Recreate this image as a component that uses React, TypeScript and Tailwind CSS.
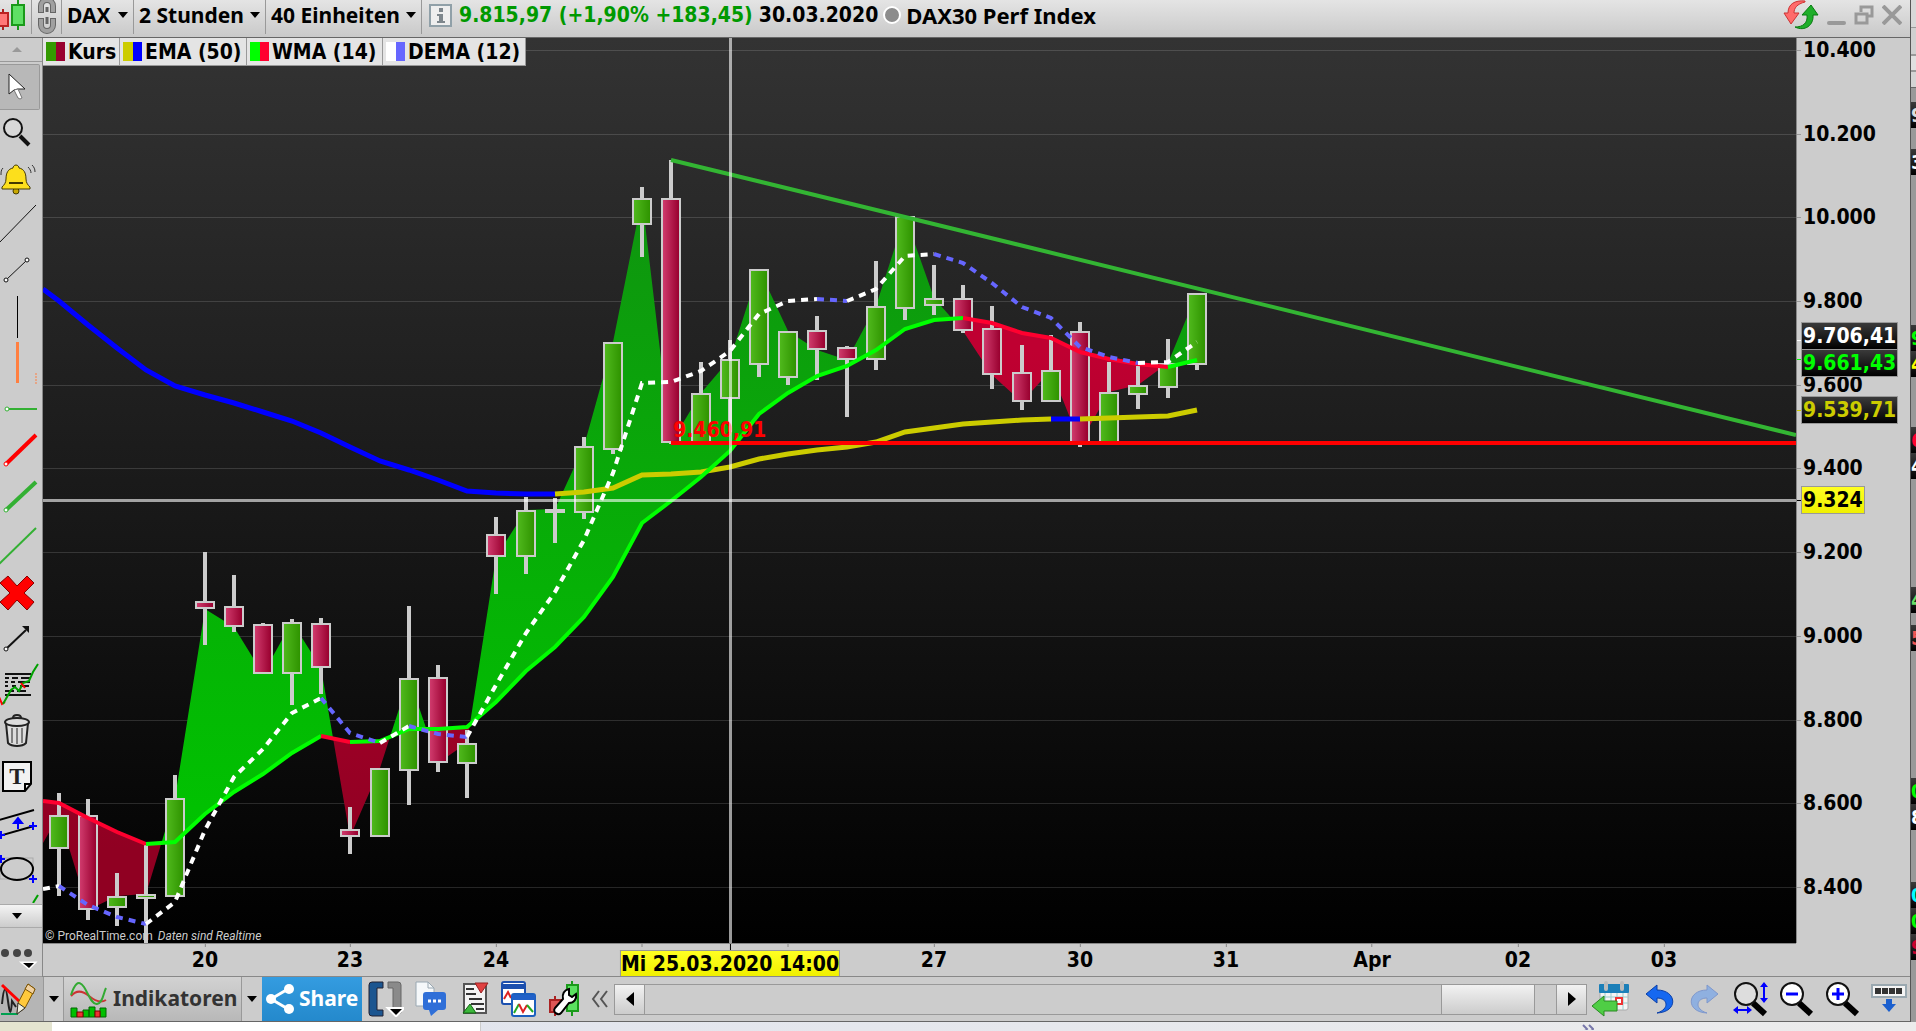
import type { ReactNode } from 'react';

type Candle = [x: number, high: number, top: number, bottom: number, low: number, up: boolean];
type Point = [x: number, y: number];

// The plot works in a fixed drawing space, see PLOT
const PLOT = { left: 43, top: 38, width: 1753, height: 905 };

const CANDLES: Candle[] = [
    [59, 793, 815, 849, 896, true],
    [88, 799, 815, 910, 920, false],
    [117, 873, 896, 908, 926, true],
    [146, 845, 894, 899, 943, true],
    [175, 775, 798, 897, 897, true],
    [205, 552, 601, 609, 645, false],
    [234, 575, 606, 627, 632, false],
    [263, 623, 624, 674, 674, false],
    [292, 619, 622, 674, 705, true],
    [321, 618, 623, 668, 694, false],
    [350, 807, 829, 837, 854, false],
    [380, 768, 768, 837, 837, true],
    [409, 606, 678, 771, 805, true],
    [438, 665, 677, 763, 772, false],
    [467, 730, 743, 764, 798, true],
    [496, 517, 534, 557, 594, false],
    [526, 497, 510, 557, 574, true],
    [555, 498, 509, 513, 543, true],
    [584, 437, 446, 513, 519, true],
    [613, 342, 342, 450, 454, true],
    [642, 187, 198, 225, 257, true],
    [671, 160, 198, 443, 444, false],
    [701, 362, 393, 443, 443, true],
    [730, 340, 359, 399, 432, true],
    [759, 269, 269, 365, 377, true],
    [788, 331, 331, 378, 385, true],
    [817, 316, 330, 350, 380, false],
    [847, 346, 347, 360, 417, false],
    [876, 261, 306, 360, 370, true],
    [905, 216, 216, 309, 320, true],
    [934, 265, 298, 306, 315, true],
    [963, 285, 298, 331, 333, false],
    [992, 306, 328, 375, 389, false],
    [1022, 345, 372, 402, 410, false],
    [1051, 335, 370, 402, 402, true],
    [1080, 322, 331, 443, 447, false],
    [1109, 362, 392, 443, 443, true],
    [1138, 366, 385, 395, 409, true],
    [1168, 339, 363, 388, 398, true],
    [1197, 293, 293, 365, 370, true],
];

const XS = [43, ...CANDLES.map((c) => c[0])];
const WMA = [
    801, 803, 818, 832, 844, 842, 814, 792, 774, 753, 736, 742, 741, 729, 729, 727, 702, 671, 647, 617, 577, 523, 501,
    477, 451, 414, 393, 376, 366, 350, 329, 320, 318, 323, 333, 338, 352, 359, 364, 367, 360,
];
const DEMA = [
    889, 886, 905, 917, 924, 902, 830, 777, 749, 713, 698, 733, 743, 726, 734, 737, 685, 633, 592, 540, 473, 383, 382,
    371, 351, 314, 301, 299, 301, 289, 256, 254, 263, 283, 307, 318, 347, 357, 363, 362, 342,
];
const EMA: Point[] = [
    [43, 289], [59, 301], [88, 325], [117, 348], [146, 370], [175, 386], [205, 395], [234, 403], [263, 412], [292, 421],
    [321, 433], [350, 447], [380, 461], [409, 470], [438, 480], [467, 491], [496, 493], [526, 494], [555, 494],
    [584, 492], [613, 488], [642, 475], [671, 474], [701, 472], [730, 467], [759, 459], [788, 454], [817, 450],
    [847, 447], [876, 442], [905, 432], [934, 428], [963, 424], [992, 422], [1022, 420], [1051, 419], [1080, 419],
    [1109, 418], [1138, 417], [1168, 416], [1197, 410],
];

const zip = (ys: number[]): Point[] => ys.map((y, i) => [XS[i], y]);
const part = (line: Point[], from: number, to: number) =>
    line
        .filter(([x]) => x >= from && x <= to)
        .map((p) => p.join(','))
        .join(' ');

// Fills between close and WMA, split where the two cross
function cloud() {
    const close = [843, ...CANDLES.map((c) => (c[5] ? c[2] : c[3]))];
    let above = '';
    let below = '';
    for (let i = 0; i < XS.length - 1; i++) {
        const [x1, x2] = [XS[i], XS[i + 1]];
        const d1 = close[i] - WMA[i];
        const d2 = close[i + 1] - WMA[i + 1];
        if (d1 * d2 >= 0) {
            const d = `M${x1} ${close[i]}L${x2} ${close[i + 1]}V${WMA[i + 1]}L${x1} ${WMA[i]}Z`;
            if (d1 + d2 < 0) above += d;
            else below += d;
            continue;
        }
        const t = d1 / (d1 - d2);
        const cross = `${x1 + t * (x2 - x1)} ${WMA[i] + t * (WMA[i + 1] - WMA[i])}`;
        const first = `M${x1} ${close[i]}L${cross}L${x1} ${WMA[i]}Z`;
        const second = `M${x2} ${close[i + 1]}L${cross}L${x2} ${WMA[i + 1]}Z`;
        above += d1 < 0 ? first : second;
        below += d1 < 0 ? second : first;
    }
    return { above, below };
}

const PRICES = [
    ['10.400', 50], ['10.200', 134], ['10.000', 217], ['9.800', 301], ['9.600', 385], ['9.400', 468],
    ['9.200', 552], ['9.000', 636], ['8.800', 720], ['8.600', 803], ['8.400', 887],
] as const;

const BADGES = [
    { text: '9.706,41', y: 335, tick: 340, color: 'text-white', line: 'bg-white' },
    { text: '9.661,43', y: 362, tick: 359, color: 'text-[#00ff00]', line: 'bg-[#00ff00]' },
    { text: '9.539,71', y: 409, tick: 410, color: 'text-[#cccc00]', line: 'bg-[#cccc00]' },
];

const DAYS = [
    ['20', 205], ['23', 350], ['24', 496], ['', 642], ['', 788], ['27', 934], ['30', 1080], ['31', 1226],
    ['Apr', 1372], ['02', 1518], ['03', 1664],
] as const;

const LEGEND = [
    ['Kurs', 'bg-[#339900]', 'bg-[#99002f]', 'w-[77px]'],
    ['EMA (50)', 'bg-[#cccc00]', 'bg-[#0000ff]', 'w-[127px]'],
    ['WMA (14)', 'bg-[#00ff00]', 'bg-[#ff002f]', 'w-[136px]'],
    ['DEMA (12)', 'bg-white', 'bg-[#6666ff]', 'w-[143px]'],
];

const topPct = (y: number) => ({ top: `${((y - PLOT.top) / PLOT.height) * 100}%` });
const leftPct = (x: number) => ({ left: `${((x - PLOT.left) / PLOT.width) * 100}%` });

function Caret() {
    return (
        <svg width="10" height="6" viewBox="0 0 10 6" className="shrink-0">
            <path d="M0 0h10L5 6z" fill="#000" />
        </svg>
    );
}

function Dropdown({ label, value, width }: { label: string; value: string; width: string }) {
    return (
        <label className={`flex h-full items-center border-r border-[#999] pr-[5px] pl-[5px] ${width}`}>
            <select aria-label={label} className="min-w-0 flex-1 appearance-none bg-transparent font-bold outline-none">
                <option>{value}</option>
            </select>
            <Caret />
        </label>
    );
}

function TopBar() {
    return (
        <header className="flex h-[38px] shrink-0 items-center border-b border-[#666] bg-linear-to-b/srgb from-[#e4e4e4] to-[#c9c9c9] pb-[7px] text-[21px] leading-[30px]">
            <div className="flex h-[37px] w-full items-center">
                <div className="h-full w-8 shrink-0 border-r border-[#999]">
                    <svg width="30" height="37" viewBox="0 0 30 37">
                        <path d="M3 12v21" stroke="#a22" strokeWidth="2" />
                        <rect x="-4" y="16" width="12" height="13" fill="#f77" stroke="#b22" strokeWidth="2" />
                        <path d="M18 3v30" stroke="#1a9a1a" strokeWidth="2" />
                        <rect x="12" y="8" width="12" height="20" fill="#5fe065" stroke="#1a9a1a" strokeWidth="2" />
                    </svg>
                </div>
                <div className="flex h-full w-[30px] shrink-0 justify-center border-r border-[#999]">
                    <svg width="20" height="37" viewBox="0 0 20 37" fill="none">
                        <path d="M4 16V9a6 6 0 0 1 12 0v7M4 21v7a6 6 0 0 0 12 0v-7" stroke="#666" strokeWidth="6" />
                        <path d="M4 15V9a6 6 0 0 1 12 0v6M4 22v6a6 6 0 0 0 12 0v-6" stroke="#a0a0a0" strokeWidth="4" />
                        <path d="M10 10v5M10 20v7" stroke="#666" strokeWidth="3" />
                    </svg>
                </div>
                <Dropdown label="Symbol" value="DAX" width="w-[72px]" />
                <Dropdown label="Intervall" value="2 Stunden" width="w-[132px]" />
                <Dropdown label="Anzahl" value="40 Einheiten" width="w-[156px]" />
                <div className="ml-[7px] flex h-[23px] w-[23px] shrink-0 items-center justify-center border-2 border-[#90a0a8] bg-[#eee]">
                    <svg width="12" height="17" viewBox="0 0 12 17" fill="#7d868c">
                        <path d="M4 1h4v4H4zM2 7h6v7h2v2H2v-2h2V9H2z" />
                    </svg>
                </div>
                <span className="ml-[7px] font-['DejaVu_Sans_Condensed',sans-serif] whitespace-nowrap text-[#009900]">
                    9.815,97 (+1,90% +183,45)
                </span>
                <span className="ml-[6px] font-['DejaVu_Sans_Condensed',sans-serif]">30.03.2020</span>
                <span className="ml-[5px] h-[18px] w-[18px] shrink-0 rounded-full border-2 border-white bg-[#8c8c8c]" />
                <h1 className="ml-[5px] text-[22px] whitespace-nowrap">DAX30 Perf Index</h1>
                <div className="mr-2 ml-auto flex h-full items-center gap-2">
                    <button type="button" aria-label="Aktualisieren">
                        <svg width="36" height="31" viewBox="0 0 36 31">
                            <path d="M22 1C12 0 5 4 5 13H1l7 11 8-11h-5c0-5 3-9 11-11z" fill="#ff6b6b" stroke="#c33" />
                            <path d="M12 27c10 5 19-2 18-12h5L28 5l-9 10h5c1 8-4 12-12 12z" fill="#1fae2a" stroke="#087a10" />
                        </svg>
                    </button>
                    <button type="button" aria-label="Minimieren" className="mt-4 h-1 w-[19px] rounded-xs bg-[#999]" />
                    <button type="button" aria-label="Wiederherstellen">
                        <svg width="20" height="20" viewBox="0 0 20 20" fill="none" stroke="#999" strokeWidth="3">
                            <path d="M7 7V2h11v9h-5M2 9h11v9H2z" />
                        </svg>
                    </button>
                    <button type="button" aria-label="Schließen">
                        <svg width="20" height="20" viewBox="0 0 20 20" stroke="#999" strokeWidth="4">
                            <path d="M1 1l18 18M19 1L1 19" />
                        </svg>
                    </button>
                </div>
            </div>
        </header>
    );
}

const PLUS = 'M-4 0H4M0 -4V4';

// One 42x46 drawing for each tool, top to bottom
const TOOLS: [string, ReactNode][] = [
    [
        'Auswahl',
        <>
            <path d="M9 9v20l5-4 4-1h7z" fill="#fff" stroke="#222" strokeWidth="1" />
            <path d="M14 25l4 8q2 2 4 0l-4-9z" fill="#fff" stroke="#777" />
        </>,
    ],
    [
        'Lupe',
        <>
            <circle cx="13" cy="18" r="9" fill="#d8d8d8" stroke="#111" strokeWidth="2" />
            <path d="M20 26l9 9" stroke="#111" strokeWidth="4" />
        </>,
    ],
    [
        'Alarm',
        <>
            <circle cx="16" cy="35" r="3" fill="#c9a800" stroke="#443a00" />
            <path
                d="M16 9c2 0 3 2 3 3 5 1 7 5 7 11 0 4 2 6 4 8v2H2v-2c2-2 4-4 4-8 0-6 2-10 7-11 0-1 1-3 3-3z"
                fill="#fcdf1c"
                stroke="#443a00"
            />
            <path d="M9 27h14" stroke="#443a00" strokeWidth="2" />
            <path d="M3 12c-2 2-2 4-2 7M28 11c2 2 3 4 3 6M32 9c2 2 3 4 3 7" stroke="#333" fill="none" />
        </>,
    ],
    ['Gerade', <path d="M-2 42L36 3" stroke="#111" strokeWidth="1" />],
    [
        'Strecke',
        <g stroke="#111" fill="#fff">
            <path d="M6 32L27 12" />
            <circle cx="6" cy="32" r="2" />
            <circle cx="27" cy="12" r="2" />
        </g>,
    ],
    ['Vertikale', <rect x="17" y="2" width="1" height="42" fill="#000" />],
    [
        'Vertikale Strecke',
        <>
            <rect x="16" y="2" width="3" height="41" fill="#ff7f40" />
            <path d="M36 33v11" stroke="#ff7f40" strokeDasharray="2 1" />
        </>,
    ],
    [
        'Horizontale',
        <>
            <path d="M7 23h30" stroke="#33b033" strokeWidth="2" />
            <circle cx="7" cy="23" r="2" fill="#fff" stroke="#33b033" />
        </>,
    ],
    [
        'Rote Linie',
        <>
            <path d="M6 32L36 3" stroke="#f00" strokeWidth="4" />
            <circle cx="6" cy="32" r="2" fill="#fff" stroke="#f00" />
        </>,
    ],
    [
        'Grüne Linie',
        <>
            <path d="M6 32L36 4" stroke="#33b033" strokeWidth="4" />
            <circle cx="6" cy="32" r="2" fill="#fff" stroke="#33b033" />
        </>,
    ],
    ['Grüne Gerade', <path d="M-1 40L36 4" stroke="#33b033" strokeWidth="2" />],
    [
        'Löschen',
        <path d="M8 6l9 10 10-10 7 7-10 10 10 9-7 8-10-10L8 40l-8-8 10-9L0 13z" fill="#f00" stroke="#800" />,
    ],
    [
        'Pfeil',
        <>
            <path d="M6 33L26 14" stroke="#111" strokeWidth="2" />
            <path d="M22 10h7v7z" fill="#111" />
            <circle cx="6" cy="33" r="2" fill="#fff" stroke="#111" />
        </>,
    ],
    [
        'Fibonacci',
        <>
            <path d="M5 12h26M5 33h26" stroke="#111" strokeWidth="2" />
            <path d="M5 16h4M12 16h6M21 16h10M5 20h3M11 20h4M18 20h12M5 24h3M12 24h4M20 24h9M5 29h9M17 29h9" stroke="#111" strokeWidth="2" />
            <path d="M-1 35l3 7 3-2" stroke="#f00" strokeWidth="2" fill="none" />
            <path d="M3 42l8-14 4-3 4 4 4-8 6-2 4-9 5-8" stroke="#00a000" strokeWidth="2" fill="none" />
            <path d="M21 21l4 5" stroke="#f00" strokeWidth="2" />
        </>,
    ],
    [
        'Papierkorb',
        <g stroke="#222" strokeWidth="2" fill="#ddd">
            <path d="M6 15l2 20c4 4 14 4 18 0l2-20z" />
            <ellipse cx="17" cy="14" rx="12" ry="4" />
            <path d="M13 10c0-4 8-4 8 0" fill="none" />
            <path d="M12 20v15M17 20v16M22 20v15" strokeWidth="1" />
        </g>,
    ],
    [
        'Text',
        <>
            <path d="M3 8h28v22l-6 7H3z" fill="#f2f2f2" stroke="#000" strokeWidth="2" />
            <path d="M31 30h-6v7" fill="none" stroke="#000" strokeWidth="2" />
            <text x="17" y="30" textAnchor="middle" fontSize="23" fill="#222" className="font-['Liberation_Serif',serif]">
                T
            </text>
        </>,
    ],
    [
        'Kanal',
        <>
            <path d="M-1 20L34 10M-1 36L34 26" stroke="#000" strokeWidth="2" />
            <path d="M18 29v-6h-4l4-5 4 5h-4" fill="#00f" stroke="#00f" strokeWidth="2" />
            <path d={PLUS} transform="translate(1 35)" stroke="#00f" strokeWidth="2" />
            <path d={PLUS} transform="translate(33 26)" stroke="#00f" strokeWidth="2" />
        </>,
    ],
    [
        'Ellipse',
        <>
            <rect x="0" y="12" width="33" height="21" fill="none" stroke="#aaa" />
            <ellipse cx="17" cy="23" rx="16" ry="11" fill="none" stroke="#000" strokeWidth="2" />
            <path d={PLUS} transform="translate(1 13)" stroke="#00f" strokeWidth="2" />
            <path d={PLUS} transform="translate(33 33)" stroke="#00f" strokeWidth="2" />
        </>,
    ],
];

function Sidebar() {
    return (
        <aside className="flex w-[43px] shrink-0 flex-col overflow-hidden border-r border-[#888] bg-[#ccc]">
            <button type="button" aria-label="Nach oben" className="mb-[2px] flex h-6 shrink-0 items-center border-b border-[#999] pl-3">
                <svg width="10" height="5" viewBox="0 0 10 5">
                    <path d="M0 5h10L5 0z" fill="#999" />
                </svg>
            </button>
            {TOOLS.map(([name, icon], i) => (
                <button
                    key={name}
                    type="button"
                    aria-label={name}
                    className={`h-[46px] shrink-0 ${i === 0 ? 'mr-[2px] rounded-r-xs border border-l-0 border-[#999] bg-[#b8b8b8]' : ''}`}
                >
                    <svg width="42" height="46" viewBox="0 0 42 46">
                        {icon}
                    </svg>
                </button>
            ))}
            <div className="min-h-0 flex-1">
                <svg width="42" height="11" viewBox="0 0 42 11">
                    <path d="M33 11l5-8" stroke="#00a000" strokeWidth="2" />
                </svg>
            </div>
            <button
                type="button"
                aria-label="Nach unten"
                className="flex h-6 shrink-0 items-center border-y border-[#aaa] bg-linear-to-b/srgb from-[#f4f4f4] to-[#ccc] pl-3"
            >
                <Caret />
            </button>
            <button type="button" aria-label="Mehr" className="h-[49px] shrink-0 border-b border-[#999]">
                <svg width="42" height="49" viewBox="0 0 42 49">
                    <g fill="#444">
                        <circle cx="5" cy="25" r="4" />
                        <circle cx="17" cy="25" r="4" />
                        <circle cx="28" cy="25" r="4" />
                    </g>
                    <path d="M23 35h11l-5 5z" fill="#000" stroke="#fff" strokeWidth="3" paintOrder="stroke" />
                </svg>
            </button>
        </aside>
    );
}

function Plot() {
    const { above, below } = cloud();
    const wma = zip(WMA);
    const dema = zip(DEMA);
    return (
        <svg
            className="absolute inset-0 h-full w-full"
            viewBox={`${PLOT.left} ${PLOT.top} ${PLOT.width} ${PLOT.height}`}
            preserveAspectRatio="none"
        >
            <defs>
                <linearGradient id="up">
                    <stop offset="0" stopColor="#4fb81c" />
                    <stop offset="1" stopColor="#2f9400" />
                </linearGradient>
                <linearGradient id="down">
                    <stop offset="0" stopColor="#cf3a6c" />
                    <stop offset="1" stopColor="#99002f" />
                </linearGradient>
                <linearGradient id="above" gradientUnits="userSpaceOnUse" x1="0" y1="200" x2="0" y2="850">
                    <stop offset="0" stopColor="#0f950f" />
                    <stop offset="1" stopColor="#00c400" />
                </linearGradient>
                <linearGradient id="below" gradientUnits="userSpaceOnUse" x1="0" y1="350" x2="0" y2="850">
                    <stop offset="0" stopColor="#bf0031" />
                    <stop offset="1" stopColor="#900022" />
                </linearGradient>
            </defs>
            {PRICES.map(([label, y]) => (
                <rect key={label} x="43" y={y} width="1753" height="1" fill="#fff" fillOpacity="0.14" />
            ))}
            <path d={above} fill="url(#above)" />
            <path d={below} fill="url(#below)" />
            {CANDLES.map(([x, high, top, bottom, low, up]) => (
                <g key={x}>
                    <rect x={x - 2} y={high} width="4" height={low - high} fill="#ccc" />
                    <rect x={x - 10} y={top} width="20" height={bottom - top} fill="#ccc" />
                    {bottom - top > 4 && (
                        <rect
                            x={x - 8}
                            y={top + 2}
                            width="16"
                            height={bottom - top - 4}
                            fill={up ? 'url(#up)' : 'url(#down)'}
                        />
                    )}
                </g>
            ))}
            <g fill="none" strokeWidth="4">
                <polyline points="671,160 905,217 1796,435" stroke="#33b533" />
                <g strokeWidth="5">
                    <polyline points={part(EMA, 43, 555)} stroke="#0000ff" />
                    <polyline points={part(EMA, 555, 1051)} stroke="#cccc00" />
                    <polyline points={part(EMA, 1051, 1080)} stroke="#0000ff" />
                    <polyline points={part(EMA, 1080, 1197)} stroke="#cccc00" />
                </g>
                <polyline points={part(wma, 43, 146)} stroke="#ff002f" />
                <polyline points={part(wma, 146, 321)} stroke="#00ff00" />
                <polyline points={part(wma, 321, 350)} stroke="#ff002f" />
                <polyline points={part(wma, 350, 963)} stroke="#00ff00" />
                <polyline points={part(wma, 963, 1168)} stroke="#ff002f" />
                <polyline points={part(wma, 1168, 1197)} stroke="#00ff00" />
                <g strokeDasharray="7 6">
                    <polyline points={part(dema, 43, 59)} stroke="#fff" />
                    <polyline points={part(dema, 59, 146)} stroke="#6666ff" />
                    <polyline points={part(dema, 146, 321)} stroke="#fff" />
                    <polyline points={part(dema, 321, 380)} stroke="#6666ff" />
                    <polyline points={part(dema, 380, 409)} stroke="#fff" />
                    <polyline points={part(dema, 409, 467)} stroke="#6666ff" />
                    <polyline points={part(dema, 467, 817)} stroke="#fff" />
                    <polyline points={part(dema, 817, 847)} stroke="#6666ff" />
                    <polyline points={part(dema, 847, 934)} stroke="#fff" />
                    <polyline points={part(dema, 934, 1138)} stroke="#6666ff" />
                    <polyline points={part(dema, 1138, 1197)} stroke="#fff" />
                </g>
                <path d="M671 443H1796" stroke="#ff0000" />
            </g>
            <text x="673" y="437" fontSize="21" fontWeight="700" fill="#f00" className="font-['DejaVu_Sans_Condensed',sans-serif]">
                9.460,91
            </text>
            <g fill="#fff" fillOpacity="0.6">
                <rect x="729" y="38" width="3" height="905" />
                <rect x="43" y="499" width="1753" height="3" />
            </g>
        </svg>
    );
}

function PriceAxis() {
    return (
        <div className="relative w-[114px] shrink-0 border-l border-[#888] font-['DejaVu_Sans_Condensed',sans-serif] text-[21px] leading-[26px]">
            {PRICES.map(([label, y]) => (
                <div key={label} className="absolute left-0 flex -translate-y-1/2 items-center gap-[2px]" style={topPct(y)}>
                    <span className="h-px w-1 bg-[#999]" />
                    {label}
                </div>
            ))}
            {BADGES.map((badge) => (
                <div key={badge.text}>
                    <span className={`absolute left-0 h-px w-1 ${badge.line}`} style={topPct(badge.tick)} />
                    <span
                        className={`absolute left-1 h-7 -translate-y-1/2 border border-[#999] bg-linear-to-b/srgb from-[#3a3a3a] to-black px-[1px] ${badge.color}`}
                        style={topPct(badge.y + 1)}
                    >
                        {badge.text}
                    </span>
                </div>
            ))}
            <span className="absolute left-0 h-px w-1 bg-black" style={topPct(500)} />
            <span
                className="absolute left-1 h-7 -translate-y-1/2 border border-[#999] bg-linear-to-b/srgb from-[#ffff22] to-[#f0f000] px-[1px]"
                style={topPct(500)}
            >
                9.324
            </span>
        </div>
    );
}

function TimeAxis() {
    return (
        <div className="flex h-[34px] shrink-0 border-b border-[#888] font-['DejaVu_Sans_Condensed',sans-serif] text-[21px] leading-[26px]">
            <div className="relative flex-1 border-t border-[#888]">
                {DAYS.map(([label, x]) => (
                    <div key={x} className="absolute top-0 flex -translate-x-1/2 flex-col items-center" style={leftPct(x)}>
                        <span className="h-[3px] w-px bg-[#888]" />
                        {label}
                    </div>
                ))}
                <div className="absolute top-0 flex -translate-x-1/2 flex-col items-center" style={leftPct(730)}>
                    <span className="h-[6px] w-px bg-black" />
                    <span className="h-[26px] border border-b-0 border-[#999] bg-linear-to-b/srgb from-[#ffff22] to-[#f0f000] whitespace-nowrap">
                        Mi 25.03.2020 14:00
                    </span>
                </div>
            </div>
            <div className="w-[114px] shrink-0" />
        </div>
    );
}

function Chart() {
    return (
        <main className="flex min-w-0 flex-1 flex-col bg-[#ccc]">
            <div className="flex min-h-0 flex-1">
                <div className="relative flex-1 overflow-hidden bg-linear-to-b/srgb from-[#333] to-black">
                    <Plot />
                    <ul className="absolute top-0 left-0 flex h-7 border-b border-[#999] bg-[#e4e4e4] font-['DejaVu_Sans_Condensed',sans-serif] text-[21px] leading-[26px]">
                        {LEGEND.map(([name, first, second, width]) => (
                            <li key={name} className={`flex items-center gap-[3px] border-r border-[#999] pl-[3px] whitespace-nowrap ${width}`}>
                                <span className="flex h-[19px] w-[19px] shrink-0">
                                    <span className={`flex-1 ${first}`} />
                                    <span className={`flex-1 ${second}`} />
                                </span>
                                {name}
                            </li>
                        ))}
                    </ul>
                    <p className="absolute bottom-0 left-0 flex gap-[5px] pl-[2px] font-['Roboto',sans-serif] text-[12px] leading-[14px] font-normal text-[#ccc]">
                        <span>© ProRealTime.com</span>
                        <i>Daten sind Realtime</i>
                    </p>
                </div>
                <PriceAxis />
            </div>
            <TimeAxis />
        </main>
    );
}

function Magnifier({ children, fill = '#fff' }: { children?: ReactNode; fill?: string }) {
    return (
        <svg width="36" height="36" viewBox="0 0 36 36">
            <path d="M20 22l12 11" stroke="#000" strokeWidth="6" />
            <circle cx="13" cy="13" r="11" fill={fill} stroke="#111" strokeWidth="2" />
            {children}
        </svg>
    );
}

function BottomBar() {
    return (
        <footer className="flex h-[45px] shrink-0 items-center border-b border-[#666] bg-[#ccc] text-[#333]">
            <button type="button" aria-label="Zeichnen" className="h-full w-11 shrink-0 border-r border-[#999] bg-[#b5b5b5]">
                <svg width="42" height="44" viewBox="0 0 42 44">
                    <path d="M2 27c2-20 4-18 6-3s3 14 4 0l4 6" fill="none" stroke="#222" strokeWidth="2" />
                    <path d="M1 37h17" stroke="#00a050" strokeWidth="2" />
                    <path d="M2 8l18 17" stroke="#f00" strokeWidth="3" />
                    <path d="M18 26L28 7l7 5-10 19-8 6z" fill="#ffc93c" stroke="#7a5200" />
                    <path d="M28 7l7 5-2 5-8-5z" fill="#f0d0a0" stroke="#7a5200" />
                    <path d="M18 26l7 5-8 6z" fill="#eed" stroke="#333" />
                </svg>
            </button>
            <button type="button" aria-label="Zeichenoptionen" className="flex h-full w-5 shrink-0 items-center justify-center border-r border-[#999]">
                <Caret />
            </button>
            <button
                type="button"
                className="flex h-full w-[178px] shrink-0 items-center gap-[6px] border-r border-[#999] bg-linear-to-b/srgb from-[#d2d2d2] to-[#b8b8b8] pl-[6px] text-[21px]"
            >
                <svg width="37" height="37" viewBox="0 0 37 37" className="shrink-0">
                    <path d="M1 15c6-7 12-5 18 0s12 7 17 4" fill="none" stroke="#c33" strokeWidth="2" />
                    <path d="M1 14C4 5 8-3 14 6c5 8 8 18 13 17 6-1 6-10 9-16" fill="none" stroke="#3a3" strokeWidth="2" />
                    <path d="M1 27h6v9H1zM13 29h6v7h-6zM19 26h6v10h-6zM30 27h6v9h-6z" fill="#00c000" stroke="#060" />
                    <path d="M7 31h6v5H7zM25 30h5v6h-5z" fill="#e33" stroke="#700" />
                </svg>
                Indikatoren
            </button>
            <button type="button" aria-label="Indikatoren wählen" className="flex h-full w-5 shrink-0 items-center justify-center">
                <Caret />
            </button>
            <button type="button" className="flex h-full w-[100px] shrink-0 items-center gap-[5px] bg-linear-to-b/srgb from-[#349ce0] to-[#2489cc] pl-1 text-[21px] text-white">
                <svg width="28" height="30" viewBox="0 0 28 30" fill="#fff" className="shrink-0">
                    <path d="M5 15L22 5M5 15l17 10" stroke="#fff" strokeWidth="3" />
                    <circle cx="5" cy="15" r="5" />
                    <circle cx="23" cy="5" r="5" />
                    <circle cx="23" cy="25" r="5" />
                </svg>
                Share
            </button>
            <div className="flex shrink-0 items-center gap-[11px] pl-[6px]">
                <button type="button" aria-label="Layout">
                    <svg width="36" height="36" viewBox="0 0 36 36">
                        <path d="M15 1H4q-3 0-3 3v28q0 3 3 3h11v-6H9V7h6z" fill="#1b5590" stroke="#223" />
                        <path d="M20 1h10q3 0 3 3v28h-8V7h-5z" fill="#8a8a8a" stroke="#666" />
                        <path d="M22 28h12l-6 6z" fill="#000" stroke="#fff" strokeWidth="4" paintOrder="stroke" />
                    </svg>
                </button>
                <button type="button" aria-label="Kommentar">
                    <svg width="32" height="36" viewBox="0 0 32 36">
                        <path d="M1 1h12l6 6v18H1z" fill="#f5f8fa" stroke="#9aa8b2" />
                        <path d="M13 1v6h6" fill="none" stroke="#9aa8b2" />
                        <path d="M11 11h17q3 0 3 3v12q0 3-3 3h-5l-7 6-2-6h-3q-3 0-3-3V14q0-3 3-3z" fill="#2f6fd8" />
                        <path d="M13 20h3M18 20h3M23 20h3" stroke="#fff" strokeWidth="3" />
                    </svg>
                </button>
                <button type="button" aria-label="Orderliste" className="pl-1">
                    <svg width="28" height="34" viewBox="0 0 28 34">
                        <path d="M2 2h22v29H2z" fill="#f4f4f4" stroke="#555" strokeWidth="2" />
                        <path d="M4 7h8M4 12h10M7 17h13M9 22h13M14 27h8" stroke="#333" strokeWidth="2" />
                        <path d="M13 1h13l-7 10z" fill="#e04040" stroke="#922" />
                        <path d="M1 31h13L8 22z" fill="#3cb83c" stroke="#161" />
                    </svg>
                </button>
                <button type="button" aria-label="Fenster">
                    <svg width="36" height="36" viewBox="0 0 36 36">
                        <rect x="1" y="1" width="23" height="22" rx="2" fill="#fff" stroke="#1b4fae" strokeWidth="2" />
                        <path d="M1 3h23v5H1z" fill="#1b4fae" />
                        <path d="M3 18l4-7 3 6" fill="none" stroke="#d22" strokeWidth="2" />
                        <rect x="11" y="13" width="23" height="22" rx="2" fill="#fff" stroke="#1b5fbe" strokeWidth="2" />
                        <path d="M11 14h23v5H11z" fill="#2060c8" />
                        <path d="M13 32l5-9" stroke="#2a2" strokeWidth="2" />
                        <path d="M18 23l4 8 4-7" fill="none" stroke="#d22" strokeWidth="2" />
                        <path d="M26 24l6 7" stroke="#2a2" strokeWidth="2" />
                    </svg>
                </button>
                <button type="button" aria-label="Handelssysteme">
                    <svg width="32" height="36" viewBox="0 0 32 36">
                        <path d="M7 15v20" stroke="#a22" strokeWidth="2" />
                        <rect x="2" y="19" width="11" height="12" fill="#d55" stroke="#a22" strokeWidth="2" />
                        <path d="M24 0v35" stroke="#1a9a1a" strokeWidth="2" />
                        <rect x="19" y="4" width="11" height="26" fill="#5be060" stroke="#1a9a1a" strokeWidth="2" />
                        <path
                            d="M7 27l8-9c-1-5 1-9 6-10v6l3 2 4-3c1 5-2 9-7 9l-8 10c-3 3-9-1-6-5z"
                            fill="#fff"
                            stroke="#000"
                            strokeWidth="2"
                        />
                    </svg>
                </button>
                <button type="button" aria-label="Leiste einklappen">
                    <svg width="18" height="18" viewBox="0 0 18 18" fill="none" stroke="#555" strokeWidth="2">
                        <path d="M8 1L2 9l6 8M16 1l-6 8 6 8" />
                    </svg>
                </button>
            </div>
            <div className="mr-1 ml-[5px] flex h-[31px] min-w-0 flex-1 border border-[#999]">
                <button type="button" aria-label="Zurück" className="flex w-[30px] items-center justify-center border-r border-[#999] bg-linear-to-b/srgb from-[#f2f2f2] to-[#ccc]">
                    <svg width="8" height="14" viewBox="0 0 8 14">
                        <path d="M8 0v14L0 7z" fill="#000" />
                    </svg>
                </button>
                <div className="flex flex-1 justify-end">
                    <div className="mr-[21px] w-[94px] border-x border-[#999] bg-linear-to-b/srgb from-[#f2f2f2] to-[#ccc]" />
                </div>
                <button type="button" aria-label="Vor" className="flex w-[30px] items-center justify-center border-l border-[#999] bg-linear-to-b/srgb from-[#f2f2f2] to-[#ccc]">
                    <svg width="8" height="14" viewBox="0 0 8 14">
                        <path d="M0 0v14l8-7z" fill="#000" />
                    </svg>
                </button>
            </div>
            <div className="flex shrink-0 items-center gap-[10px] pr-[3px]">
                <button type="button" aria-label="Zum Datum">
                    <svg width="40" height="36" viewBox="0 0 40 36">
                        <path d="M9 10h28v17q0 2-2 2H9z" fill="#f4f4f4" stroke="#aaa" />
                        <path d="M14 12v17M20 12v17M26 12v17M32 12v17M9 16h28M9 22h28" stroke="#9cc" />
                        <rect x="8" y="3" width="30" height="9" rx="1" fill="#1b7fb8" />
                        <path d="M15 2v6M31 2v6" stroke="#bbb" strokeWidth="4" strokeLinecap="round" />
                        <rect x="25" y="17" width="6" height="6" fill="#fff" stroke="#e33" strokeWidth="2" />
                        <path d="M1 25l12-10v5h13v10H13v5z" fill="#4fce45" stroke="#2a8a22" />
                    </svg>
                </button>
                <button type="button" aria-label="Rückgängig" className="ml-1">
                    <svg width="30" height="30" viewBox="0 0 30 30">
                        <path d="M1 10L12 1v5c20 0 22 22 0 23 13-4 11-15 0-15v5z" fill="#1668f0" stroke="#0a3fa8" />
                    </svg>
                </button>
                <button type="button" aria-label="Wiederholen" className="mx-1">
                    <svg width="30" height="30" viewBox="0 0 30 30">
                        <path d="M29 10L18 1v5c-20 0-22 22 0 23-13-4-11-15 0-15v5z" fill="#8fb0e0" stroke="#7f98cc" />
                    </svg>
                </button>
                <button type="button" aria-label="Zoom anpassen">
                    <Magnifier fill="#ddd">
                        <path d="M31 4v16M2 29h15" stroke="#00f" strokeWidth="2" />
                        <path d="M27 6h8l-4-5zM27 17h8l-4 5zM5 25v8l-5-4zM14 25v8l5-4z" fill="#00f" />
                    </Magnifier>
                </button>
                <button type="button" aria-label="Verkleinern">
                    <Magnifier>
                        <path d="M7 13h12" stroke="#00f" strokeWidth="3" />
                    </Magnifier>
                </button>
                <button type="button" aria-label="Vergrößern">
                    <Magnifier>
                        <path d="M7 13h12M13 7v12" stroke="#00f" strokeWidth="3" />
                    </Magnifier>
                </button>
                <button type="button" aria-label="Leiste ablösen">
                    <svg width="36" height="30" viewBox="0 0 36 30">
                        <rect x="1" y="1" width="34" height="12" fill="#f4f4f4" stroke="#9aa8b0" strokeWidth="2" />
                        <path d="M4 7h28" stroke="#333" strokeWidth="6" strokeDasharray="6 1" />
                        <path d="M15 15h6v5h4l-7 8-7-8h4z" fill="#1b5fce" />
                    </svg>
                </button>
            </div>
        </footer>
    );
}

// Slice of the neighbouring window that shows behind the right edge
const BEHIND = [
    ['mt-[14px]', '9', 'text-[#ddd]'],
    ['mt-[21px]', '3', 'text-white'],
    ['mt-[150px]', '9', 'text-[#00ff00]'],
    ['', '4', 'text-[#ffff00]'],
    ['mt-[50px]', '6', 'text-[#ff002f]'],
    ['', '4', 'text-white'],
    ['mt-[108px]', '4', 'text-[#66dd66]'],
    ['mt-3', '5', 'text-[#ee5555]'],
    ['mt-[127px]', '0', 'text-[#00ff00]'],
    ['', '8', 'text-white'],
    ['mt-[52px]', '0', 'text-[#00ffff]'],
    ['', '0', 'text-[#00ff00]'],
    ['', '9', 'text-[#cc002f]'],
];

function Behind() {
    return (
        <div className="w-[6px] shrink-0 overflow-hidden border-l border-[#555] bg-[#999] font-['DejaVu_Sans_Condensed',sans-serif] text-[20px] leading-[26px]" aria-hidden>
            <div className="h-7 border-b border-[#999] bg-[#d8d8d8]" />
            <div className="h-7 border-b-2 border-[#999] bg-[#d0d0d0]" />
            <div className="h-4 border-b-2 border-[#999] bg-[#e0e0e0]" />
            <div className="h-4 border-b border-[#666] bg-[#d4d4d4]" />
            {BEHIND.map(([gap, digit, color], i) => (
                <div key={i} className={`h-[26px] overflow-hidden bg-linear-to-b/srgb from-[#3a3a3a] to-black ${gap} ${color}`}>
                    {digit}
                </div>
            ))}
        </div>
    );
}

export default function App() {
    return (
        <div className="flex h-screen flex-col overflow-hidden bg-[#e8e8ea] font-['Noto_Sans',sans-serif] font-bold text-black">
            <div className="flex min-h-0 flex-1">
                <div className="flex min-w-0 flex-1 flex-col">
                    <TopBar />
                    <div className="flex min-h-0 flex-1">
                        <Sidebar />
                        <Chart />
                    </div>
                    <BottomBar />
                </div>
                <Behind />
            </div>
            <div className="flex h-[9px] shrink-0 bg-linear-to-r/srgb from-[#dfe3ee] to-[#ececec]">
                <div className="w-[52px] bg-[#e4e4d0]" />
                <div className="w-[429px] border-r border-[#ccc] bg-white" />
                <div className="flex-1 pr-[322px] text-right">
                    <svg width="12" height="8" viewBox="0 0 12 8" className="ml-auto" fill="none" stroke="#77a" strokeWidth="2">
                        <path d="M1 3l4 4-4 4M7 3l4 4-4 4" />
                    </svg>
                </div>
            </div>
        </div>
    );
}
